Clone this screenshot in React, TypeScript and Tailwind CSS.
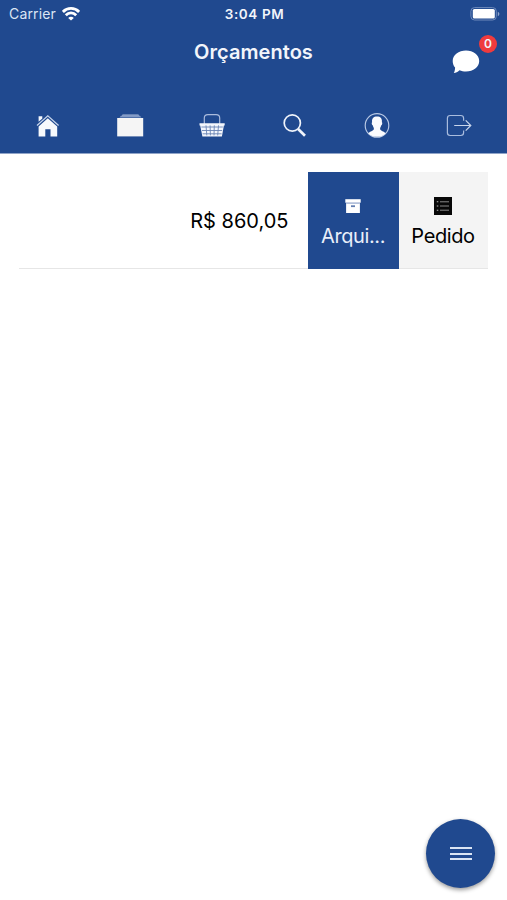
import type { ReactNode } from 'react';

function WifiIcon() {
  return (
    <svg className="h-[14px] w-[18px]" viewBox="0 0 18 14" fill="none" stroke="#fff" strokeWidth="2.8">
      <path d="M0.9 4.9C5.4 0.3 12.6 0.3 17.1 4.9" />
      <path d="M3.8 8.2C6.8 5.2 11.2 5.2 14.2 8.2" />
      <path d="M9 13.6L6.2 10.9C7.8 9.4 10.2 9.4 11.8 10.9Z" fill="#fff" stroke="none" />
    </svg>
  );
}

function BatteryIcon() {
  return (
    <svg className="h-[14px] w-[30px]" viewBox="0 0 30 14">
      <rect x="0.9" y="0.6" width="25.4" height="12.4" rx="3.6" fill="none" stroke="#6f8abb" strokeWidth="1" />
      <rect x="2.8" y="2" width="22" height="9.6" rx="1.6" fill="#fff" />
      <path d="M27.8 4.8C29.9 5.6 29.9 8.4 27.8 9.2Z" fill="#8fa5cb" />
    </svg>
  );
}

function ChatIcon() {
  return (
    <svg className="h-[24px] w-[28px]" viewBox="0 0 28 24" fill="#fff">
      <path d="M14 0.5C21.3 0.5 27.2 5 27.2 11S21.3 21.5 14 21.5C11.6 21.5 9.5 21.1 7.5 20.2C5.5 21.9 4 23 1.8 23C2.8 21.5 3 19.5 3.1 17.6C1.5 15.8 0.7 13.5 0.7 11C0.7 5 6.7 0.5 14 0.5Z" />
    </svg>
  );
}

function HomeIcon() {
  return (
    <svg className="size-7" viewBox="0 0 28 28">
      <path d="M4.6 4.2H8.3V6.5L4.6 9.8Z" fill="#f5f8fd" />
      <path d="M3 13.4L13.8 3.8L24.6 13.4" fill="none" stroke="#c5d3ea" strokeWidth="1.3" />
      <path d="M13.8 6.2L23.2 14.4V24.5H16.5V17.3H11.3V24.5H4.6V14.4Z" fill="#f7f9fc" />
    </svg>
  );
}

function AlbumsIcon() {
  return (
    <svg className="size-7" viewBox="0 0 28 28">
      <path d="M6.6 2.6H22.4L23.4 3.8H5.6Z" fill="#a9bbda" />
      <path d="M5 3.8H24L25.4 5.6H3.4Z" fill="#7f98c5" />
      <rect x="1.2" y="6" width="26" height="18.4" fill="#f5f5f5" />
    </svg>
  );
}

function BasketIcon() {
  return (
    <svg className="size-7" viewBox="0 0 28 28">
      <path d="M6.3 12V6C6.3 3.8 7.6 2.6 9.9 2.6H18.1C20.4 2.6 21.7 3.8 21.7 6V12" fill="none" stroke="#aabbdc" strokeWidth="1.2" />
      <path d="M1.5 11.2H26.7V13.6H25.9L23.9 24.4H4.4L2.2 13.6H1.5Z" fill="#f3f6fc" />
      <path d="M3.4 15H24.8M4 18.5H24.2M4.6 21.8H23.6M8 13.4L8.8 23.4M12.1 13.4L12.4 23.4M16.3 13.4L16 23.4M20.5 13.4L19.7 23.4" fill="none" stroke="#6a84b4" strokeWidth="0.9" />
    </svg>
  );
}

function SearchIcon() {
  return (
    <svg className="size-7" viewBox="0 0 28 28" fill="none" stroke="#f0f4fb">
      <circle cx="11.3" cy="11" r="8.1" strokeWidth="1.7" />
      <path d="M17.1 17L24 23.7" strokeWidth="2.7" />
    </svg>
  );
}

function ContactIcon() {
  return (
    <svg className="size-7" viewBox="0 0 28 28">
      <circle cx="14" cy="13.4" r="11.8" fill="none" stroke="#b9c9e5" strokeWidth="1.15" />
      <path d="M14 4.6C17.5 4.6 19.3 6.6 18.9 10.2C19.6 10.5 19.3 12.7 18.3 13.3C18 14.8 17.2 15.6 17.1 16.6C17 19.5 20.7 18.8 22.5 21.4C20.3 23.6 17.4 24.7 14 24.7S7.7 23.6 5.5 21.4C7.3 18.8 11 19.5 10.9 16.6C10.8 15.6 10 14.8 9.7 13.3C8.7 12.7 8.4 10.5 9.1 10.2C8.7 6.6 10.5 4.6 14 4.6Z" fill="#fafbfe" />
    </svg>
  );
}

function ExitIcon() {
  return (
    <svg className="size-7" viewBox="0 0 28 28" fill="none" stroke="#a9bcde" strokeWidth="1.2">
      <path d="M18.6 8.8V6.2C18.6 4.5 17.5 3.5 15.8 3.5H5.1C3.4 3.5 2.4 4.5 2.4 6.2V20.8C2.4 22.5 3.4 23.5 5.1 23.5H15.8C17.5 23.5 18.6 22.5 18.6 20.8V18.4" />
      <path d="M9.2 13.5H25.5M20.7 8.4L25.8 13.5L20.7 18.6" stroke="#c8d5eb" />
    </svg>
  );
}

function ArchiveIcon() {
  return (
    <svg className="h-[15px] w-4" viewBox="0 0 16 15">
      <rect x="0.3" y="0.2" width="15.4" height="3.5" fill="#fff" />
      <path d="M1.1 3.7H14.9V14H1.1Z" fill="#fff" />
      <path d="M1.1 4.3H14.9" stroke="#9fb1d2" strokeWidth="1" />
      <path d="M6 7.2H10" stroke="#627db0" strokeWidth="1.8" />
    </svg>
  );
}

function ListBoxIcon() {
  return (
    <svg className="size-[18px]" viewBox="0 0 18 18">
      <rect width="18" height="18" fill="#080808" />
      <path d="M2.8 4.8H4.3M2.8 9H4.3M2.8 13.2H4.3" stroke="#bbb" strokeWidth="1.1" />
      <path d="M6 4.8H15M6 9H15M6 13.2H15" stroke="#999" strokeWidth="0.9" />
    </svg>
  );
}

function Tab({ label, children }: { label: string; children: ReactNode }) {
  return (
    <button aria-label={label} className="flex items-center justify-center">
      {children}
    </button>
  );
}

export default function App() {
  return (
    <div className="flex h-[900px] w-[507px] flex-col bg-white font-['Inter','Liberation_Sans',sans-serif] text-black">
      <header className="flex h-[154px] shrink-0 flex-col border-b border-[#90a4c8] bg-[#20498f] text-[#f2f5fb]">
        <div className="grid h-7 shrink-0 grid-cols-3 items-center pr-[7px] pl-[9px]">
          <div className="flex items-center gap-[6px]">
            <span className="text-[14px] leading-4 tracking-[0.15px] text-[#dce5f4]">Carrier</span>
            <WifiIcon />
          </div>
          <span className="text-center text-[13.5px] leading-4 font-semibold tracking-[0.6px]">3:04 PM</span>
          <div className="flex justify-end">
            <BatteryIcon />
          </div>
        </div>
        <div className="relative flex h-[69px] shrink-0 items-start justify-center pt-[10px]">
          <h1 className="text-[20px] leading-7 font-semibold tracking-[0.05px]">Orçamentos</h1>
          <button aria-label="Chat" className="absolute top-[22px] right-[27px]">
            <ChatIcon />
          </button>
          <span className="absolute top-[7px] right-[10px] flex size-[18px] items-center justify-center rounded-full bg-[#ef3b3d] text-[12px] leading-none font-semibold">
            0
          </span>
        </div>
        <nav className="grid h-14 shrink-0 grid-cols-6 items-center px-[6.5px] pt-[2px]">
          <Tab label="Início"><HomeIcon /></Tab>
          <Tab label="Catálogo"><AlbumsIcon /></Tab>
          <Tab label="Cesta"><BasketIcon /></Tab>
          <Tab label="Buscar"><SearchIcon /></Tab>
          <Tab label="Perfil"><ContactIcon /></Tab>
          <Tab label="Sair"><ExitIcon /></Tab>
        </nav>
      </header>
      <main className="flex-1 pt-[18px] pr-[19.5px] pl-[19.4px]">
        <div className="flex h-[97px]">
          <div className="flex flex-1 items-center justify-end border-b border-[#e6e6e6] pt-px pr-[19px]">
            <span className="text-[20px] leading-6">R$ 860,05</span>
          </div>
          <button className="flex w-[91px] flex-col items-center bg-[#20498f] pt-[27px] text-[#e9effa]">
            <ArchiveIcon />
            <span className="mt-[10px] text-[20px] leading-6 tracking-[-0.4px]">Arqui...</span>
          </button>
          <button className="flex w-[89px] flex-col items-center border-b border-[#e6e6e6] bg-[#f4f4f4] pt-[25px]">
            <ListBoxIcon />
            <span className="mt-[9px] text-[20px] leading-6 tracking-[-0.4px]">Pedido</span>
          </button>
        </div>
      </main>
      <footer className="flex shrink-0 justify-end pr-3 pb-3">
        <button
          aria-label="Menu"
          className="flex size-[69px] flex-col items-center justify-center gap-[3.5px] rounded-full bg-[#20498f] shadow-[0_2px_4px_rgba(0,0,0,0.4)]"
        >
          <span className="h-[2px] w-[22px] bg-[#dae4f4]" />
          <span className="h-[2px] w-[22px] bg-[#dae4f4]" />
          <span className="h-[2px] w-[22px] bg-[#dae4f4]" />
        </button>
      </footer>
    </div>
  );
}
